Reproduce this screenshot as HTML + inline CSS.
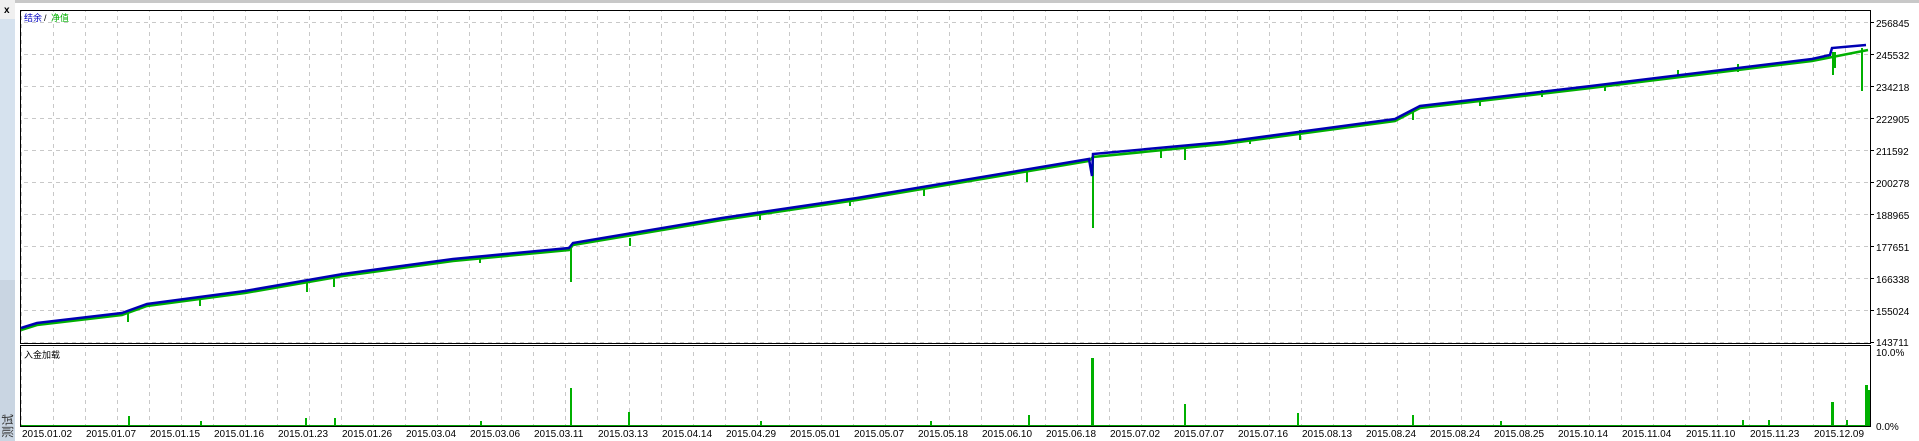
<!DOCTYPE html>
<html><head><meta charset="utf-8"><style>
html,body{margin:0;padding:0;width:1919px;height:441px;overflow:hidden;background:#fff;font-family:"Liberation Sans","Noto Sans CJK SC",sans-serif;}
</style></head><body>
<svg width="1919" height="441" xmlns="http://www.w3.org/2000/svg" style="position:absolute;left:0;top:0">
<rect x="0" y="0" width="1919" height="441" fill="#fff"/>
<rect x="0" y="0" width="1919" height="3" fill="#c8c8c8"/>
<rect x="0" y="0" width="15" height="441" fill="#d6e2ee"/>
<rect x="0" y="0" width="15" height="19" fill="#f0f0f0"/>
<rect x="0" y="280" width="15" height="161" fill="#c9d5e2"/>
<text x="4" y="13" font-size="10" font-weight="bold" fill="#000">x</text>
<text x="12" y="438" font-size="12" fill="#333" transform="rotate(-90 12 438)" font-family="Noto Sans CJK SC,sans-serif">测试</text>
<defs>
<pattern id="vg" x="53" y="0" width="32" height="8" patternUnits="userSpaceOnUse">
<rect x="0" y="0" width="1" height="4" fill="#c8c8c8"/></pattern>
<pattern id="hg" x="0" y="22" width="8" height="32" patternUnits="userSpaceOnUse">
<rect x="0" y="0" width="4" height="1" fill="#c8c8c8"/></pattern>
</defs>
<rect x="21" y="11" width="1849" height="332" fill="url(#vg)"/>
<rect x="21" y="11" width="1849" height="332" fill="url(#hg)"/>
<rect x="21" y="347" width="1849" height="79" fill="url(#vg)"/>
<rect x="20.5" y="10.5" width="1850" height="333" fill="none" stroke="#000" stroke-width="1"/>
<rect x="20.5" y="345.5" width="1850" height="81" fill="none" stroke="#000" stroke-width="1"/>
<text x="24" y="21" font-size="9" fill="#0000c0" font-family="Noto Sans CJK SC,sans-serif">结余</text>
<text x="44" y="21" font-size="9" fill="#000">/</text>
<text x="51" y="21" font-size="9" fill="#00b000" font-family="Noto Sans CJK SC,sans-serif">净值</text>
<text x="24" y="358" font-size="9" fill="#000" font-family="Noto Sans CJK SC,sans-serif">入金加载</text>
<g stroke="#00b000" stroke-width="2">
<line x1="571" y1="248" x2="571" y2="282"/>
<line x1="1093" y1="160" x2="1093" y2="228"/>
<line x1="1862" y1="48" x2="1862" y2="91"/>
<line x1="1833" y1="52" x2="1833" y2="75"/>
<line x1="1835" y1="52" x2="1835" y2="68"/>
<line x1="1185" y1="147" x2="1185" y2="160"/>
<line x1="1413" y1="110" x2="1413" y2="120"/>
<line x1="1027" y1="170" x2="1027" y2="182"/>
<line x1="630" y1="238" x2="630" y2="246"/>
<line x1="128" y1="312" x2="128" y2="322"/>
<line x1="307" y1="283" x2="307" y2="292"/>
<line x1="334" y1="278" x2="334" y2="287"/>
<line x1="1300" y1="130" x2="1300" y2="140"/>
<line x1="1738" y1="64" x2="1738" y2="72"/>
<line x1="1542" y1="90" x2="1542" y2="97"/>
<line x1="1605" y1="84" x2="1605" y2="91"/>
<line x1="1678" y1="70" x2="1678" y2="77"/>
<line x1="924" y1="188" x2="924" y2="196"/>
<line x1="1161" y1="150" x2="1161" y2="158"/>
<line x1="200" y1="300" x2="200" y2="306"/>
<line x1="480" y1="257" x2="480" y2="263"/>
<line x1="760" y1="214" x2="760" y2="220"/>
<line x1="850" y1="200" x2="850" y2="206"/>
<line x1="1250" y1="138" x2="1250" y2="144"/>
<line x1="1480" y1="100" x2="1480" y2="106"/>
</g>
<polyline fill="none" stroke="#00b000" stroke-width="2.5" points="21,330 37,325 122,315 147,306 245,293 343,276 453,261 569,250 573,245 722,220 857,200 1089,161 1093,157 1224,144 1395,121 1420,108 1591,88 1812,61 1868,50"/>
<polyline fill="none" stroke="#0000b4" stroke-width="2.5" points="21,328 37,323 122,313 147,304 245,291 343,274 453,259 569,248 573,243 722,218 857,198 1089,159 1092,176 1093,154 1224,142 1395,119 1420,106 1591,86 1812,59 1830,55 1832,48 1866,45"/>
<g fill="#00b000">
<rect x="570" y="388" width="2" height="38"/>
<rect x="1091" y="358" width="3" height="68"/>
<rect x="1184" y="404" width="2" height="22"/>
<rect x="1831" y="402" width="3" height="24"/>
<rect x="1865" y="385" width="3" height="41"/>
<rect x="1868" y="390" width="2" height="36"/>
<rect x="628" y="412" width="2" height="14"/>
<rect x="1297" y="413" width="2" height="13"/>
<rect x="1412" y="415" width="2" height="11"/>
<rect x="1028" y="415" width="2" height="11"/>
<rect x="128" y="416" width="2" height="10"/>
<rect x="334" y="418" width="2" height="8"/>
<rect x="305" y="418" width="2" height="8"/>
<rect x="1742" y="420" width="2" height="6"/>
<rect x="1768" y="420" width="2" height="6"/>
<rect x="1846" y="420" width="2" height="6"/>
<rect x="200" y="421" width="2" height="5"/>
<rect x="480" y="421" width="2" height="5"/>
<rect x="760" y="421" width="2" height="5"/>
<rect x="930" y="421" width="2" height="5"/>
<rect x="1500" y="421" width="2" height="5"/>
</g>
<rect x="21" y="425" width="1849" height="1" fill="#00a000"/>
<g font-size="10" fill="#000">
<g stroke="#000"><line x1="1871" y1="22.5" x2="1874" y2="22.5"/><line x1="1871" y1="54.5" x2="1874" y2="54.5"/><line x1="1871" y1="86.5" x2="1874" y2="86.5"/><line x1="1871" y1="118.5" x2="1874" y2="118.5"/><line x1="1871" y1="150.5" x2="1874" y2="150.5"/><line x1="1871" y1="182.5" x2="1874" y2="182.5"/><line x1="1871" y1="214.5" x2="1874" y2="214.5"/><line x1="1871" y1="246.5" x2="1874" y2="246.5"/><line x1="1871" y1="278.5" x2="1874" y2="278.5"/><line x1="1871" y1="310.5" x2="1874" y2="310.5"/><line x1="1871" y1="342.5" x2="1874" y2="342.5"/></g>
<text x="1876" y="27">256845</text>
<text x="1876" y="59">245532</text>
<text x="1876" y="91">234218</text>
<text x="1876" y="123">222905</text>
<text x="1876" y="155">211592</text>
<text x="1876" y="187">200278</text>
<text x="1876" y="219">188965</text>
<text x="1876" y="251">177651</text>
<text x="1876" y="283">166338</text>
<text x="1876" y="315">155024</text>
<text x="1876" y="346">143711</text>
<text x="1876" y="356">10.0%</text>
<text x="1876" y="430">0.0%</text>
</g>
<g font-size="10" fill="#000">
<text x="22" y="437">2015.01.02</text><text x="86" y="437">2015.01.07</text><text x="150" y="437">2015.01.15</text><text x="214" y="437">2015.01.16</text><text x="278" y="437">2015.01.23</text><text x="342" y="437">2015.01.26</text><text x="406" y="437">2015.03.04</text><text x="470" y="437">2015.03.06</text><text x="534" y="437">2015.03.11</text><text x="598" y="437">2015.03.13</text><text x="662" y="437">2015.04.14</text><text x="726" y="437">2015.04.29</text><text x="790" y="437">2015.05.01</text><text x="854" y="437">2015.05.07</text><text x="918" y="437">2015.05.18</text><text x="982" y="437">2015.06.10</text><text x="1046" y="437">2015.06.18</text><text x="1110" y="437">2015.07.02</text><text x="1174" y="437">2015.07.07</text><text x="1238" y="437">2015.07.16</text><text x="1302" y="437">2015.08.13</text><text x="1366" y="437">2015.08.24</text><text x="1430" y="437">2015.08.24</text><text x="1494" y="437">2015.08.25</text><text x="1558" y="437">2015.10.14</text><text x="1622" y="437">2015.11.04</text><text x="1686" y="437">2015.11.10</text><text x="1750" y="437">2015.11.23</text><text x="1814" y="437">2015.12.09</text>
</g>
</svg>
</body></html>
